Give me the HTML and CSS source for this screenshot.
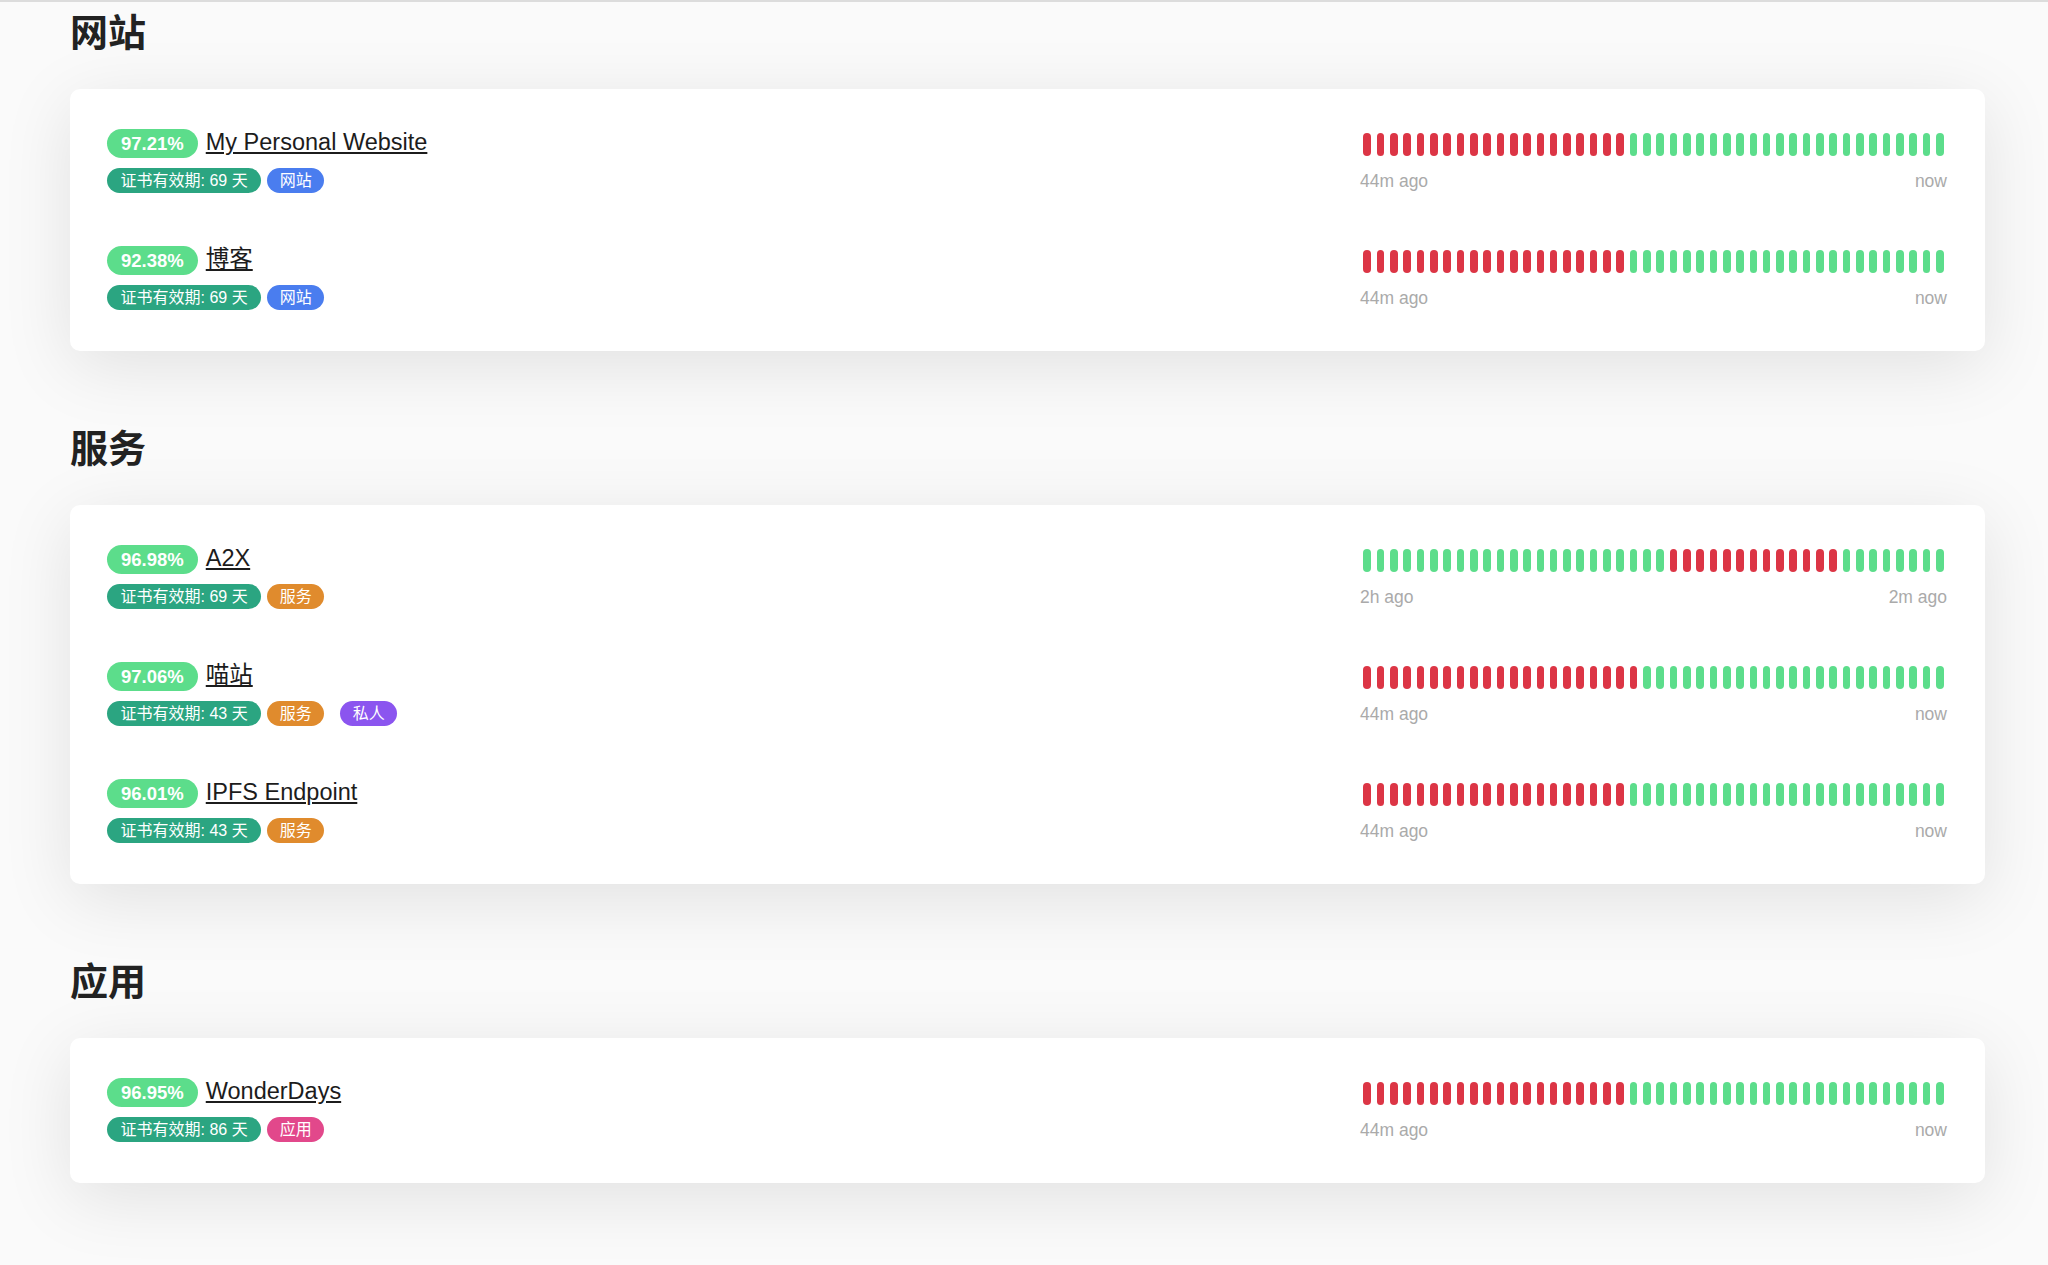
FILE: index.html
```html
<!DOCTYPE html>
<html lang="zh-CN">
<head>
    <meta charset="UTF-8">
    <meta name="viewport" content="width=device-width, initial-scale=1.0">
    <title>Status</title>
    <link rel="stylesheet" href="styles.css">
</head>
<body>
    <div class="page">
        <section class="group">
            <h2 class="group-title">网站</h2>
            <div class="group-card">
                <div class="monitor">
                    <div class="monitor-info">
                        <div class="monitor-head">
                            <span class="uptime">97.21%</span>
                            <a class="monitor-name" href="#">My Personal Website</a>
                        </div>
                        <div class="monitor-tags">
                            <span class="tag cert">证书有效期: 69 天</span>
                            <span class="tag blue">网站</span>
                        </div>
                    </div>
                    <div class="monitor-beats">
                        <div class="beats" data-pattern="down:20 up:24"></div>
                        <div class="beat-time"><span>44m ago</span><span>now</span></div>
                    </div>
                </div>
                <div class="monitor">
                    <div class="monitor-info">
                        <div class="monitor-head">
                            <span class="uptime">92.38%</span>
                            <a class="monitor-name" href="#">博客</a>
                        </div>
                        <div class="monitor-tags">
                            <span class="tag cert">证书有效期: 69 天</span>
                            <span class="tag blue">网站</span>
                        </div>
                    </div>
                    <div class="monitor-beats">
                        <div class="beats" data-pattern="down:20 up:24"></div>
                        <div class="beat-time"><span>44m ago</span><span>now</span></div>
                    </div>
                </div>
            </div>
        </section>

        <section class="group">
            <h2 class="group-title">服务</h2>
            <div class="group-card">
                <div class="monitor">
                    <div class="monitor-info">
                        <div class="monitor-head">
                            <span class="uptime">96.98%</span>
                            <a class="monitor-name" href="#">A2X</a>
                        </div>
                        <div class="monitor-tags">
                            <span class="tag cert">证书有效期: 69 天</span>
                            <span class="tag orange">服务</span>
                        </div>
                    </div>
                    <div class="monitor-beats">
                        <div class="beats" data-pattern="up:23 down:13 up:8"></div>
                        <div class="beat-time"><span>2h ago</span><span>2m ago</span></div>
                    </div>
                </div>
                <div class="monitor">
                    <div class="monitor-info">
                        <div class="monitor-head">
                            <span class="uptime">97.06%</span>
                            <a class="monitor-name" href="#">喵站</a>
                        </div>
                        <div class="monitor-tags">
                            <span class="tag cert">证书有效期: 43 天</span>
                            <span class="tag orange">服务</span>
                            <span class="tag purple spaced">私人</span>
                        </div>
                    </div>
                    <div class="monitor-beats">
                        <div class="beats" data-pattern="down:21 up:23"></div>
                        <div class="beat-time"><span>44m ago</span><span>now</span></div>
                    </div>
                </div>
                <div class="monitor">
                    <div class="monitor-info">
                        <div class="monitor-head">
                            <span class="uptime">96.01%</span>
                            <a class="monitor-name" href="#">IPFS Endpoint</a>
                        </div>
                        <div class="monitor-tags">
                            <span class="tag cert">证书有效期: 43 天</span>
                            <span class="tag orange">服务</span>
                        </div>
                    </div>
                    <div class="monitor-beats">
                        <div class="beats" data-pattern="down:20 up:24"></div>
                        <div class="beat-time"><span>44m ago</span><span>now</span></div>
                    </div>
                </div>
            </div>
        </section>

        <section class="group">
            <h2 class="group-title">应用</h2>
            <div class="group-card">
                <div class="monitor">
                    <div class="monitor-info">
                        <div class="monitor-head">
                            <span class="uptime">96.95%</span>
                            <a class="monitor-name" href="#">WonderDays</a>
                        </div>
                        <div class="monitor-tags">
                            <span class="tag cert">证书有效期: 86 天</span>
                            <span class="tag pink">应用</span>
                        </div>
                    </div>
                    <div class="monitor-beats">
                        <div class="beats" data-pattern="down:20 up:24"></div>
                        <div class="beat-time"><span>44m ago</span><span>now</span></div>
                    </div>
                </div>
            </div>
        </section>
    </div>

    <script>
        // Build the heartbeat bars from "kind:count" runs
        document.querySelectorAll('.beats').forEach(function (bar) {
            bar.dataset.pattern.split(' ').forEach(function (run) {
                const [kind, count] = run.split(':');
                for (let i = 0; i < Number(count); i++) {
                    const beat = document.createElement('div');
                    beat.className = 'beat ' + kind;
                    bar.appendChild(beat);
                }
            });
        });
    </script>
</body>
</html>
```

FILE: styles.css
```css
body {
    margin: 0;
    background-color: #fafafa;
    border-top: 2px solid #dcdcdc;
    font-family: "Liberation Sans", "Noto Sans CJK SC", sans-serif;
    color: #212529;
}
.page {
    width: 1915px;
    margin-left: 70px;
    padding-top: 5px;
    padding-bottom: 80px;
}
.group + .group {
    margin-top: 76px;
}
.group-title {
    margin: 4px 0 34px;
    font-size: 38px;
    line-height: 44px;
    font-weight: 700;
    color: #222;
}
.group-card {
    background-color: #fff;
    border-radius: 10px;
    box-shadow: 0 15px 70px rgba(0, 0, 0, 0.1);
    padding: 14px 38px 14px 37px;
}
.monitor {
    display: flex;
    justify-content: space-between;
    padding: 26px 0 27px;
}
.monitor-head {
    display: flex;
    align-items: flex-start;
    height: 29px;
}
.uptime {
    background-color: #5cdd8b;
    color: #fff;
    font-weight: 700;
    font-size: 18.5px;
    line-height: 29px;
    padding: 0 14px;
    border-radius: 15px;
}
.monitor-name {
    margin-left: 8px;
    font-size: 23.5px;
    line-height: 26px;
    color: #1c1c1c;
    text-decoration: underline;
}
.monitor-tags {
    display: flex;
    gap: 6px;
    margin-top: 10px;
}
.tag {
    font-size: 16px;
    line-height: 25px;
    padding: 0 12.5px;
    border-radius: 13px;
    color: #fff;
}
.tag.cert {
    background-color: #2ba581;
    padding: 0 13.5px;
}
.tag.blue {
    background-color: #4a7def;
}
.tag.orange {
    background-color: #e08b2d;
}
.tag.purple {
    background-color: #8b55ef;
}
.tag.pink {
    background-color: #e2488b;
}
.tag.spaced {
    margin-left: 10px; /* an extra space sits before this tag */
}
.monitor-beats {
    width: 587px;
    padding-top: 4px;
}
.beats {
    display: flex;
    justify-content: center;
    gap: 5.67px;
}
.beat {
    width: 7.67px;
    height: 23.3px;
    border-radius: 4px;
}
.beat.up {
    background-color: #5cdd8b;
}
.beat.down {
    background-color: #dc3545;
}
.beat-time {
    display: flex;
    justify-content: space-between;
    margin-top: 15px;
    font-size: 17.5px;
    line-height: 20px;
    color: #aaa;
}
```
